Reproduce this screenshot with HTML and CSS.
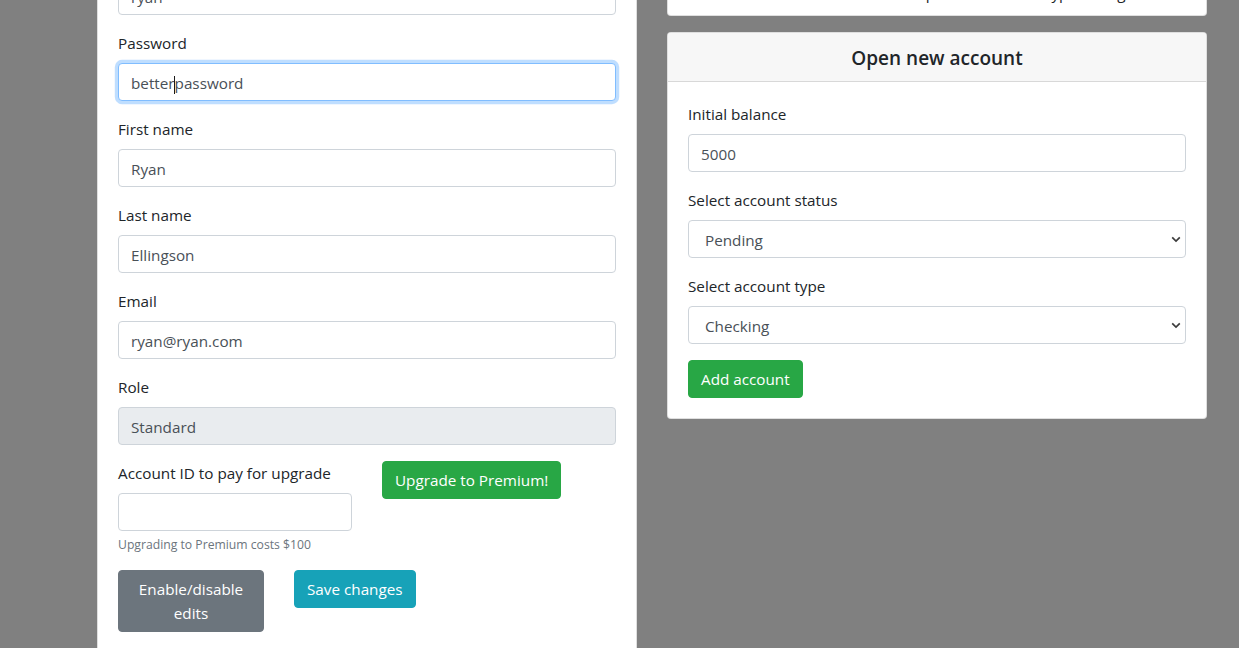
FILE: index.html
```html
<!DOCTYPE html>
<html lang="en">
<head>
<meta charset="utf-8">
<title>Profile</title>
<link rel="stylesheet" href="styles.css">
</head>
<body>
<div class="page">
  <div class="column">
    <div class="card">
      <div class="card-body">
        <div class="form-group">
          <label class="label">Username</label>
          <input class="form-control" type="text" value="ryan">
        </div>
        <div class="form-group">
          <label class="label">Password</label>
          <div class="input-wrap">
            <input class="form-control focused" type="text" value="betterpassword">
            <span class="caret"></span>
          </div>
        </div>
        <div class="form-group">
          <label class="label">First name</label>
          <input class="form-control" type="text" value="Ryan">
        </div>
        <div class="form-group">
          <label class="label">Last name</label>
          <input class="form-control" type="text" value="Ellingson">
        </div>
        <div class="form-group">
          <label class="label">Email</label>
          <input class="form-control" type="text" value="ryan@ryan.com">
        </div>
        <div class="form-group">
          <label class="label">Role</label>
          <input class="form-control" type="text" value="Standard" disabled>
        </div>
        <div class="upgrade-row">
          <div class="form-group">
            <label class="label">Account ID to pay for upgrade</label>
            <input class="form-control" type="text" value="">
            <small class="help">Upgrading to Premium costs $100</small>
          </div>
          <div>
            <button class="btn btn-success" type="button">Upgrade to Premium!</button>
          </div>
        </div>
        <div class="action-row">
          <button class="btn btn-secondary btn-block" type="button">Enable/disable edits</button>
          <div>
            <button class="btn btn-info" type="button">Save changes</button>
          </div>
        </div>
      </div>
    </div>
  </div>
  <div class="column">
    <div class="card">
      <div class="card-body top-body">
        <h5 class="top-title">Your accounts</h5>
        <div class="desc-row">
          <span class="c1">Open</span>
          <span class="c2">Type</span>
          <span class="c3">Log</span>
        </div>
      </div>
    </div>
    <div class="card card-gap">
      <div class="card-header">
        <h5 class="card-title">Open new account</h5>
      </div>
      <div class="card-body">
        <div class="form-group">
          <label class="label">Initial balance</label>
          <input class="form-control" type="text" value="5000">
        </div>
        <div class="form-group">
          <label class="label">Select account status</label>
          <div class="select-wrap">
            <select class="form-control custom-select">
              <option>Pending</option>
              <option>Approved</option>
            </select>
            <svg class="chevron" width="10" height="7" viewBox="0 0 10 7"><path d="M1.2 1.4 L5 5 L8.8 1.4" fill="none" stroke="#3c3c3c" stroke-width="1.7"/></svg>
          </div>
        </div>
        <div class="form-group">
          <label class="label">Select account type</label>
          <div class="select-wrap">
            <select class="form-control custom-select">
              <option>Checking</option>
              <option>Savings</option>
            </select>
            <svg class="chevron" width="10" height="7" viewBox="0 0 10 7"><path d="M1.2 1.4 L5 5 L8.8 1.4" fill="none" stroke="#3c3c3c" stroke-width="1.7"/></svg>
          </div>
        </div>
        <button class="btn btn-success" type="button">Add account</button>
      </div>
    </div>
  </div>
</div>
</body>
</html>
```
FILE: styles.css
```css
* { box-sizing: border-box; }

html, body {
  margin: 0;
  padding: 0;
  background: #808080;
  height: 100%;
  overflow: hidden;
}

body {
  font-family: "Open Sans", "Noto Sans", sans-serif;
  font-size: 15.25px;
  line-height: 24px;
  color: #212529;
}

.page {
  display: flex;
  gap: 30px;
  padding-left: 97px;
  margin-top: -76px;
}

.column {
  width: 540px;
  flex: none;
}

.card {
  background: #fff;
  border: 1px solid rgba(0, 0, 0, 0.125);
  border-radius: 4px;
}

.card-gap { margin-top: 16px; }

.card-body { padding: 20px; }

.top-body { padding-bottom: 10px; }

.top-title {
  margin: 0 0 12px;
  font-size: 19px;
  line-height: 24px;
  font-weight: 600;
  text-align: center;
}

.desc-row {
  display: grid;
  grid-template-columns: 226px 129px 57px auto;
}
.desc-row .c1 { grid-column: 2; }
.desc-row .c2 { grid-column: 3; white-space: nowrap; }
.desc-row .c3 { grid-column: 4; }

.card-header {
  background: #f7f7f7;
  border-bottom: 1px solid rgba(0, 0, 0, 0.125);
  padding: 13px 20px 11px;
  border-radius: 3px 3px 0 0;
}

.card-title {
  margin: 0;
  font-size: 19px;
  line-height: 24px;
  font-weight: 600;
  text-align: center;
  color: #212529;
}

.form-group { margin-bottom: 16px; }

.label {
  display: block;
  margin-bottom: 8px;
  line-height: 24px;
}

.form-control {
  display: block;
  width: 100%;
  height: 38px;
  padding: 7px 12px 5px;
  font-family: inherit;
  font-size: 15.25px;
  line-height: 24px;
  color: #495057;
  background: #fff;
  border: 1px solid #ced4da;
  border-radius: 4px;
  outline: none;
  margin: 0;
}

.form-control:disabled {
  background: #e9ecef;
  color: #495057;
  opacity: 1;
  -webkit-text-fill-color: #495057;
}

.form-control.focused {
  border-color: #80bdff;
  box-shadow: 0 0 0 3.2px rgba(0, 123, 255, 0.25);
}

.input-wrap { position: relative; }

.caret {
  position: absolute;
  left: 56px;
  top: 13px;
  width: 1px;
  height: 18px;
  background: #1a1a1a;
}

.select-wrap { position: relative; }

.custom-select {
  -webkit-appearance: none;
  appearance: none;
  padding-left: 16px;
  padding-right: 30px;
}

.chevron {
  position: absolute;
  right: 5px;
  top: 16px;
}

.help {
  display: block;
  margin-top: 5px;
  font-size: 12.2px;
  line-height: 18px;
  color: #6c757d;
}

.upgrade-row {
  display: grid;
  grid-template-columns: 234px 234px;
  column-gap: 30px;
}

.action-row {
  display: grid;
  grid-template-columns: 146px 146px;
  column-gap: 30px;
  align-items: start;
}

.btn {
  display: inline-block;
  font-family: inherit;
  font-size: 15.25px;
  line-height: 24px;
  font-weight: 400;
  padding: 6px 12px;
  border: 1px solid transparent;
  border-radius: 4px;
  color: #fff;
  text-align: center;
  cursor: pointer;
}

.btn-block {
  display: block;
  width: 100%;
}

.btn-success { background: #28a745; border-color: #28a745; }
.btn-secondary { background: #6c757d; border-color: #6c757d; }
.btn-info { background: #17a2b8; border-color: #17a2b8; }
```
